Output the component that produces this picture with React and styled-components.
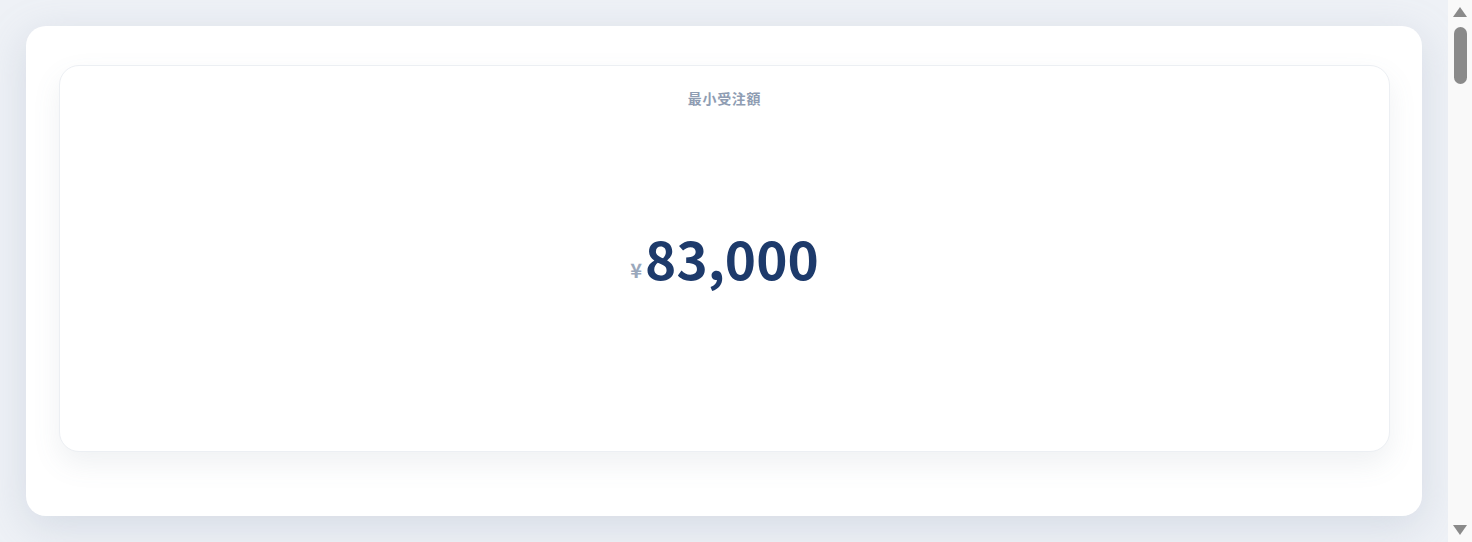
import React from 'react';
import styled, { createGlobalStyle } from 'styled-components';

const GlobalStyle = createGlobalStyle`
  * { box-sizing: border-box; }
  body {
    margin: 0;
    background: #eef1f6;
    font-family: "Noto Sans CJK JP", "Noto Sans", sans-serif;
  }
`

const Page = styled.div`
  padding: 26px 50px 26px 26px;
`

const Panel = styled.section`
  background: #ffffff;
  border-radius: 20px;
  padding: 39px 32px 64px 33px;
  box-shadow: 0 10px 40px rgba(148, 163, 184, 0.28);
`

const StatCard = styled.div`
  height: 387px;
  display: flex;
  flex-direction: column;
  align-items: center;
  padding-top: 22px;
  padding-bottom: 44px;
  background: #ffffff;
  border: 1px solid #eceff3;
  border-radius: 20px;
  box-shadow: 0 12px 28px rgba(100, 116, 139, 0.10);
`

const Label = styled.div`
  font-size: 14px;
  font-weight: 700;
  letter-spacing: 0.05em;
  color: #8f9db3;
  line-height: 20px;
`

const ValueRow = styled.div`
  flex: 1;
  display: flex;
  align-items: center;
  justify-content: center;
`

const Amount = styled.div`
  line-height: 1;
  color: #1d3a6b;
  white-space: nowrap;
`

const Currency = styled.span`
  font-size: 20px;
  font-weight: 700;
  color: #9aa8bc;
  margin-right: 3px;
  vertical-align: 2px;
`

const Figure = styled.span`
  font-size: 53px;
  font-weight: 700;
`

/* page scroll rail on the right edge */
const Rail = styled.div`
  position: fixed;
  top: 0;
  right: 0;
  bottom: 0;
  width: 24px;
  background: #f9f9f9;
  display: flex;
  flex-direction: column;
  align-items: center;
  padding: 7px 0 7px;
`

const Arrow = styled.div`
  width: 0;
  height: 0;
  border-left: 7px solid transparent;
  border-right: 7px solid transparent;
  ${({ $down }) => ($down
    ? 'border-top: 10px solid #8a8a8a; margin-top: auto;'
    : 'border-bottom: 10px solid #8a8a8a;')}
`

const Thumb = styled.div`
  width: 13px;
  height: 57px;
  margin-top: 10px;
  border-radius: 7px;
  background: #8a8a8a;
`

const App = () => (
  <>
    <GlobalStyle />
    <Page>
      <Panel>
        <StatCard>
          <Label>最小受注額</Label>
          <ValueRow>
            <Amount>
              <Currency>¥</Currency>
              <Figure>83,000</Figure>
            </Amount>
          </ValueRow>
        </StatCard>
      </Panel>
    </Page>
    <Rail>
      <Arrow />
      <Thumb />
      <Arrow $down />
    </Rail>
  </>
);

export default App;
